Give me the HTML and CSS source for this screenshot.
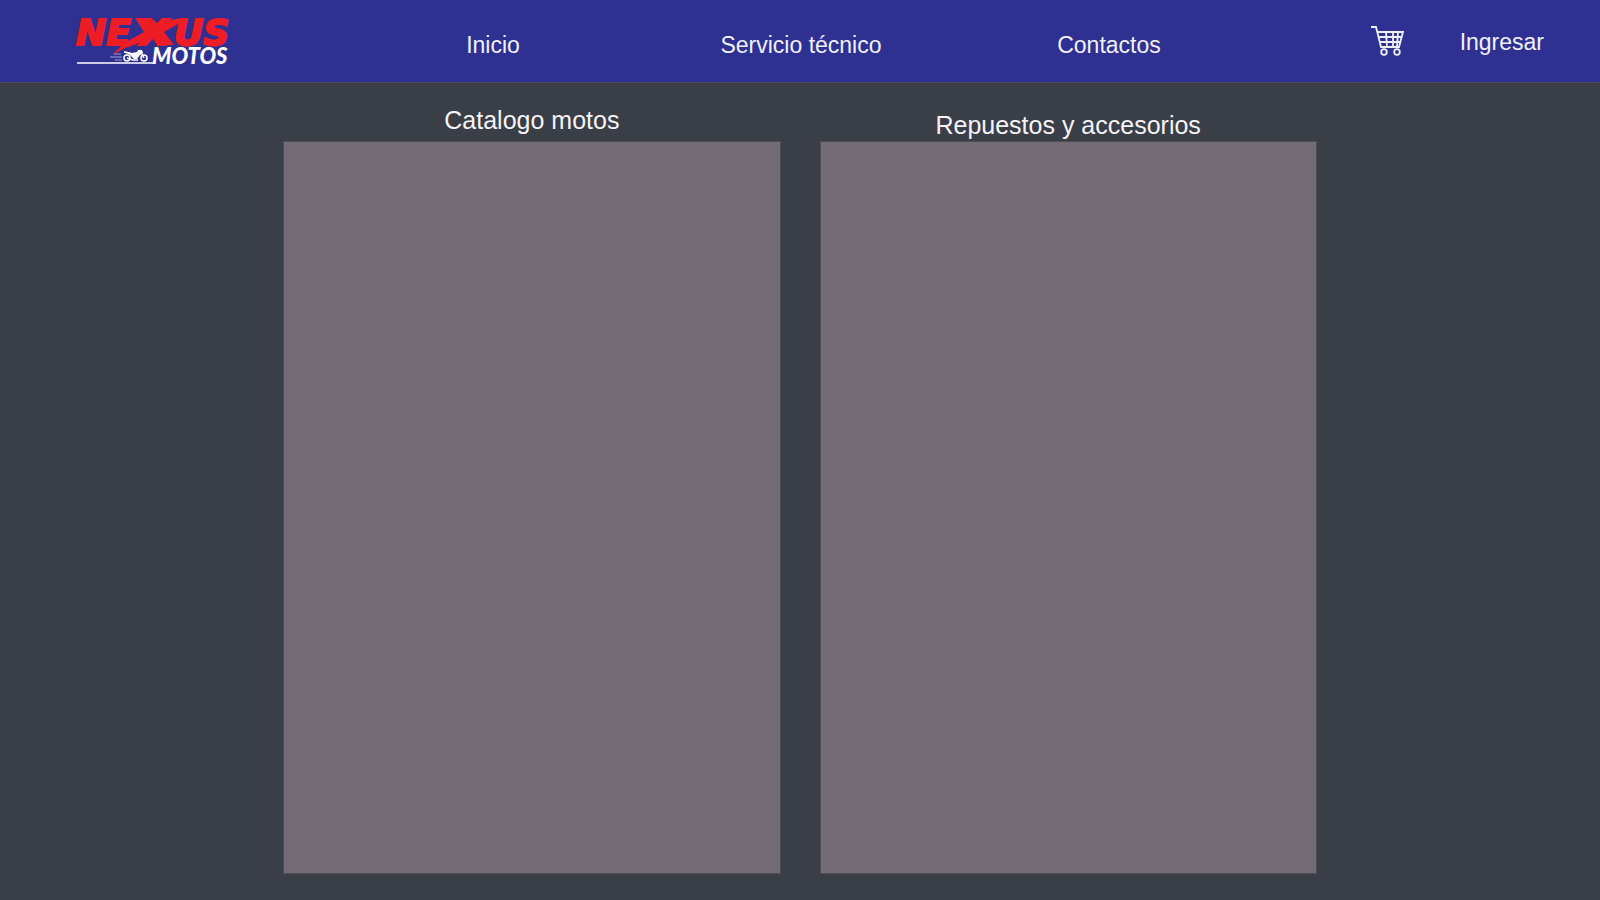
FILE: index.html
```html
<!DOCTYPE html>
<html lang="es">
<head>
<meta charset="utf-8">
<meta name="viewport" content="width=device-width, initial-scale=1">
<title>Nexus Motos</title>
<link rel="stylesheet" href="styles.css">
</head>
<body>
<header class="header">
  <a class="logo" href="#" aria-label="Nexus Motos">
    <svg class="logo-art" viewBox="0 0 160 52" width="160" height="52">
      <text class="logo-nexus" y="30"><tspan x="2">NE</tspan><tspan x="66">X</tspan><tspan x="100">US</tspan></text>
      <path class="logo-bolt" d="M61 3H77L84 9L97 5L107 3L104 9L90 17L100 30H84L77 22L60 30L51 33L38 40L50 28L70 17Z"/>
      <text class="logo-motos" x="78" y="49">MOTOS</text>
      <path class="logo-road" d="M3 48H79"/>
      <path class="logo-speed" d="M40 39H47M36 42H48M41 45H48"/>
      <g class="logo-bike">
        <circle cx="53" cy="43" r="3"/>
        <circle cx="70" cy="43" r="3"/>
        <path d="M66 35L70 43M53 43L59 45H64M50 37L58 39"/>
        <path class="logo-bike-body" d="M50 36L58 38L63 37L64 35H68L69 38L66 40L63 44H60L56 40Z"/>
      </g>
    </svg>
  </a>
  <nav class="nav">
    <a class="link" href="#">Inicio</a>
    <a class="link" href="#">Servicio técnico</a>
    <a class="link" href="#">Contactos</a>
  </nav>
  <div class="actions">
    <a class="cart" href="#" aria-label="Carrito">
      <svg viewBox="0 0 34 32" width="34" height="32">
        <path d="M1 1H6L11 21H29L33 6H8M9 11H31M10 16H30M16 6L17 21M23 6V21M28 6L27 21"/>
        <circle cx="14" cy="26" r="2.800"/>
        <circle cx="27" cy="26" r="2.800"/>
      </svg>
    </a>
    <a class="link" href="#">Ingresar</a>
  </div>
</header>
<main class="main">
  <section class="category">
    <h2 class="title title-raised">Catalogo motos</h2>
    <div class="panel"></div>
  </section>
  <section class="category">
    <h2 class="title">Repuestos y accesorios</h2>
    <div class="panel"></div>
  </section>
</main>
</body>
</html>
```
FILE: styles.css
```css
* {
  box-sizing: border-box;
}

body {
  margin: 0;
  min-height: 100vh;
  display: flex;
  flex-direction: column;
  background: #3a3e46;
  color: #f4f4f6;
  font-family: "Liberation Sans", Arial, sans-serif;
}

.header {
  display: grid;
  grid-template-columns: 339fr 924fr 337fr;
  align-items: center;
  min-height: 83px;
  background: #2e3192;
  border-bottom: 1px solid #4b4b68;
}

.logo {
  padding-left: 74px;
}

.logo-art {
  display: block;
  overflow: visible;
}

.logo-nexus {
  font: italic 700 36px "DejaVu Sans", sans-serif;
  fill: #ee1c25;
  stroke: #ee1c25;
  stroke-width: 2px;
}

.logo-bolt {
  fill: #ee1c25;
}

.logo-motos {
  font: italic 900 22px Lato, sans-serif;
  fill: #fff;
}

.logo-road {
  stroke: #fff;
  stroke-width: 1.5px;
}

.logo-speed {
  stroke: #9fa1d4;
  stroke-width: 1px;
}

.logo-bike {
  fill: none;
  stroke: #fff;
  stroke-width: 1.5px;
}

.logo-bike-body {
  fill: #fff;
  stroke: none;
}

.nav {
  display: grid;
  grid-template-columns: repeat(3, 1fr);
  justify-items: center;
  padding-top: 7px;
}

.link {
  color: #f0f0fa;
  font-size: 23px;
  line-height: 28px;
  text-decoration: none;
}

.actions {
  display: flex;
  align-items: center;
  justify-content: flex-end;
  gap: 56px;
  padding: 2px 56px 0 0;
}

.cart svg {
  display: block;
  fill: none;
  stroke: #f0f0fa;
  stroke-width: 1.8px;
}

.main {
  flex: 1;
  display: grid;
  grid-template-columns: 1fr 1fr;
  gap: 39px;
  width: 64.6%;
  margin: 0 auto;
  padding: 20px 0 26px;
}

.category {
  display: flex;
  flex-direction: column;
}

.title {
  height: 38px;
  margin: 0;
  padding-top: 8px;
  font-size: 25px;
  font-weight: 400;
  line-height: 28px;
  text-align: center;
}

.title-raised {
  padding-top: 3px;
}

.panel {
  flex: 1;
  background: #736b75;
  border: 1px solid #4f4c50;
}
```
